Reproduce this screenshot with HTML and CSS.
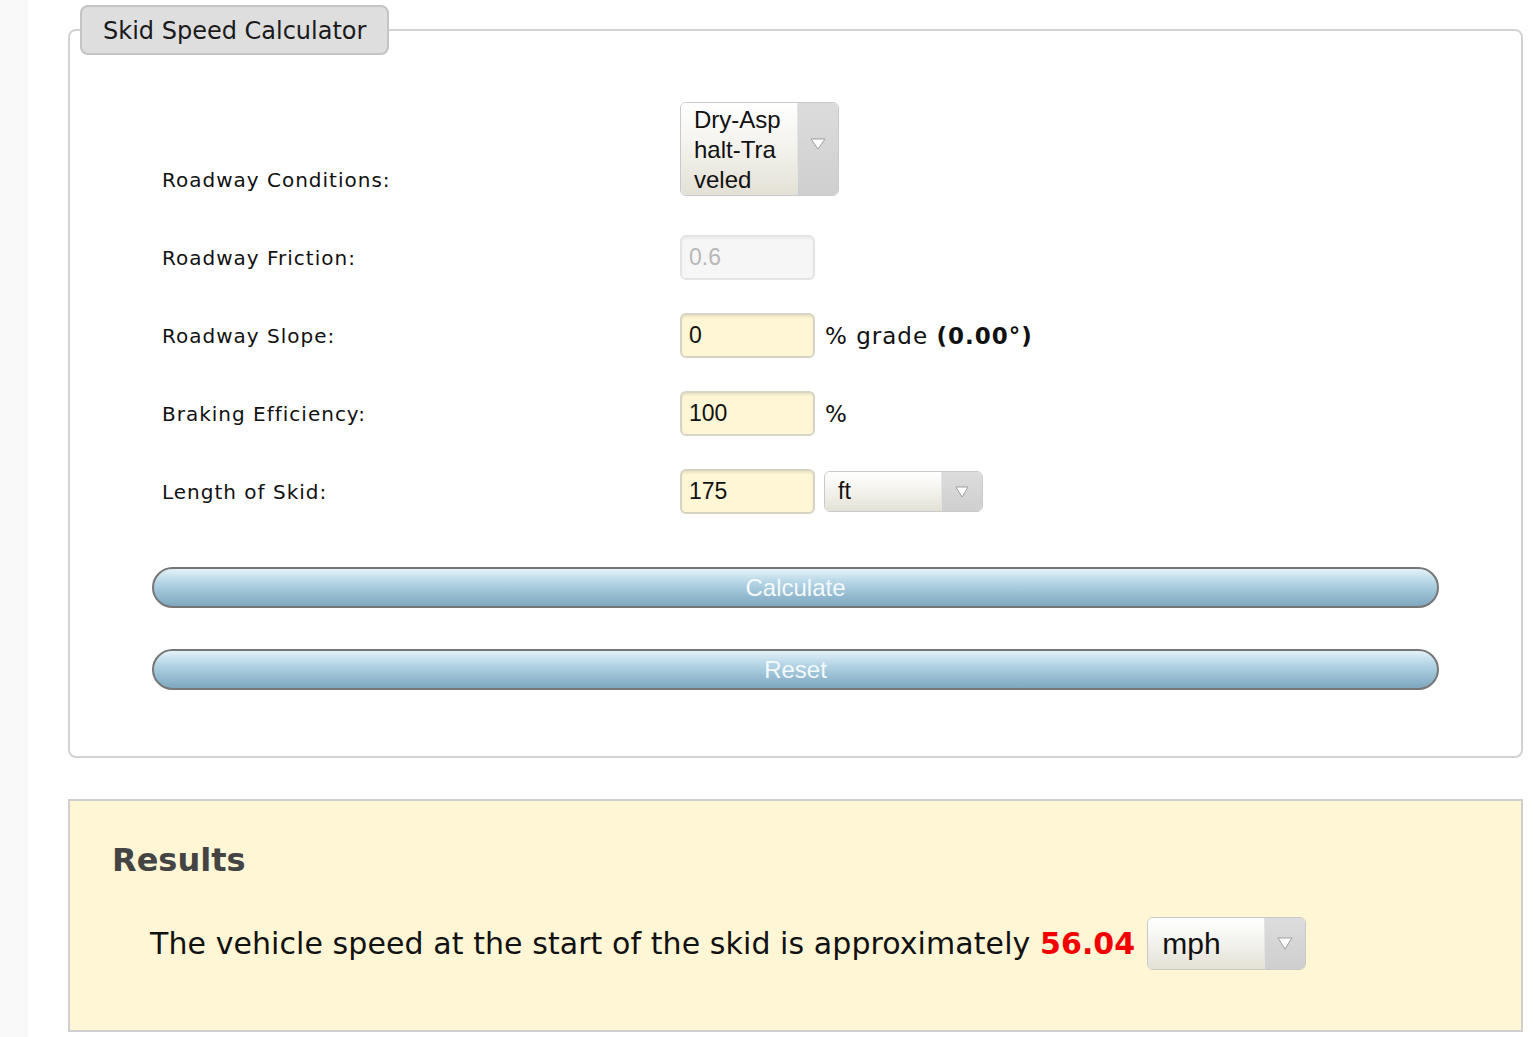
FILE: index.html
```html
<!DOCTYPE html>
<html lang="en">
<head>
  <meta charset="UTF-8">
  <meta name="viewport" content="width=device-width, initial-scale=1.0">
  <title>Skid Speed Calculator</title>
  <link rel="stylesheet" href="styles.css">
</head>
<body>
  <div class="page">
    <div class="sidebar"></div>
    <div class="main">
      <fieldset class="calc">
        <legend>Skid Speed Calculator</legend>
        <form id="skidForm" class="calc-form">
          <div class="row row-top">
            <label class="label">Roadway Conditions:</label>
            <div class="select select-tall">
              <span class="select-text">Dry-Asp<br>halt-Tra<br>veled</span>
              <span class="select-arrow">
                <svg width="16" height="12" viewBox="0 0 16 12"><polygon points="1,1 15,1 8,11" fill="#fff" stroke="#9d9d9d" stroke-width="1"/></svg>
              </span>
            </div>
          </div>

          <div class="row">
            <label class="label" for="friction">Roadway Friction:</label>
            <input class="field" type="text" id="friction" value="0.6" disabled>
          </div>

          <div class="row">
            <label class="label" for="slope">Roadway Slope:</label>
            <input class="field" type="text" id="slope" value="0">
            <span class="suffix">% grade <b>(0.00°)</b></span>
          </div>

          <div class="row">
            <label class="label" for="efficiency">Braking Efficiency:</label>
            <input class="field" type="text" id="efficiency" value="100">
            <span class="suffix">%</span>
          </div>

          <div class="row">
            <label class="label" for="length">Length of Skid:</label>
            <input class="field" type="text" id="length" value="175">
            <div class="select select-unit">
              <span class="select-text">ft</span>
              <span class="select-arrow">
                <svg width="14" height="12" viewBox="0 0 14 12"><polygon points="1,1 13,1 7,11" fill="#fff" stroke="#9d9d9d" stroke-width="1"/></svg>
              </span>
            </div>
          </div>

          <button type="submit" class="btn btn-calc">Calculate</button>
          <button type="reset" class="btn">Reset</button>
        </form>
      </fieldset>

      <div class="results">
        <h2>Results</h2>
        <div class="result-line">
          <span class="result-text">The vehicle speed at the start of the skid is approximately <b class="speed">56.04</b></span>
          <div class="select select-speed">
            <span class="select-text">mph</span>
            <span class="select-arrow">
              <svg width="16" height="13" viewBox="0 0 16 13"><polygon points="1,1 15,1 8,12" fill="#fff" stroke="#9d9d9d" stroke-width="1"/></svg>
            </span>
          </div>
        </div>
      </div>
    </div>
  </div>
</body>
</html>
```

FILE: styles.css
```css
body {
  margin: 0;
  font-family: "DejaVu Sans", Verdana, sans-serif;
  color: #111;
  background: #fff;
}
.page {
  display: flex;
  min-height: 1037px;
}
.sidebar {
  width: 28px;
  flex: none;
  background: #f9f9f9;
}
.main {
  flex: 1;
  padding: 5px 11px 0 40px;
}
.calc {
  margin: 0;
  padding: 0 0 66px;
  border: 2px solid #d2d2d2;
  border-radius: 8px;
}
.calc legend {
  margin-left: 10px;
  padding: 0 21px;
  height: 50px;
  box-sizing: border-box;
  line-height: 49px;
  font-size: 24px;
  color: #1a1a1a;
  background: #dedede;
  border: 2px solid #c4c4c4;
  border-radius: 8px;
}
.calc-form {
  padding: 47px 82px 0;
}
.row {
  display: flex;
  align-items: center;
  padding-left: 10px;
  margin-bottom: 33px;
}
.row-top {
  align-items: flex-end;
  margin-bottom: 39px;
}
.row-top .label {
  padding-bottom: 4px;
}
.label {
  width: 518px;
  flex: none;
  font-size: 20px;
  letter-spacing: 1px;
  line-height: 24px;
}
.field {
  width: 135px;
  height: 45px;
  box-sizing: border-box;
  margin: 0;
  padding: 0 7px;
  font-family: "Liberation Sans", Arial, sans-serif;
  font-size: 23px;
  color: #111;
  background: #fff6d6;
  border: 2px solid #d8d4c4;
  border-radius: 6px;
  box-shadow: inset 0 2px 2px rgba(0, 0, 0, 0.08);
}
.field:disabled {
  color: #b8b8b8;
  background: #f6f6f6;
  border-color: #e4e4e4;
  box-shadow: inset 0 2px 2px rgba(0, 0, 0, 0.04);
}
.suffix {
  margin-left: 10px;
  font-size: 23px;
  letter-spacing: 1px;
}
.select {
  display: flex;
  box-sizing: border-box;
  width: 159px;
  border: 1px solid #c9c9c9;
  border-radius: 6px;
  overflow: hidden;
  font-family: "Liberation Sans", Arial, sans-serif;
  font-size: 23px;
  color: #111;
}
.select-text {
  flex: 1;
  display: flex;
  align-items: center;
  padding-left: 13px;
  background: linear-gradient(#ffffff, #f1f0ea 55%, #e3e1d6);
}
.select-arrow {
  width: 40px;
  flex: none;
  display: flex;
  align-items: center;
  justify-content: center;
  background: linear-gradient(#dcdcdc, #cfcfcf);
  border-left: 1px solid #e4e4e4;
}
.select-tall {
  height: 94px;
  font-size: 24px;
}
.select-tall .select-text {
  line-height: 30px;
  padding-top: 1px;
}
.select-tall .select-arrow {
  padding-bottom: 10px;
}
.select-unit {
  height: 41px;
  margin-left: 9px;
}
.btn {
  display: block;
  width: 100%;
  height: 41px;
  margin: 53px 0 0;
  padding: 0;
  font-family: "Liberation Sans", Arial, sans-serif;
  font-size: 24px;
  color: #f4f9fc;
  background: linear-gradient(#e4f2f9, #b6d6e6 35%, #95bcd1 70%, #7fa8c0);
  border: 2px solid #767676;
  border-radius: 21px;
  cursor: pointer;
}
.btn + .btn {
  margin-top: 41px;
}
.results {
  margin-top: 41px;
  padding: 39px 42px 60px;
  background: #fff6d6;
  border: 2px solid #cfcfcf;
}
.results h2 {
  margin: 0;
  font-size: 32px;
  line-height: 40px;
  color: #444;
}
.result-line {
  display: flex;
  align-items: center;
  margin-top: 37px;
  padding-left: 38px;
  font-size: 30px;
}
.result-text {
  letter-spacing: 0.075px;
}
.speed {
  color: #f20000;
}
.select-speed {
  height: 53px;
  margin-left: 12px;
  font-size: 30px;
}
.select-speed .select-text {
  padding-left: 14px;
}
```
